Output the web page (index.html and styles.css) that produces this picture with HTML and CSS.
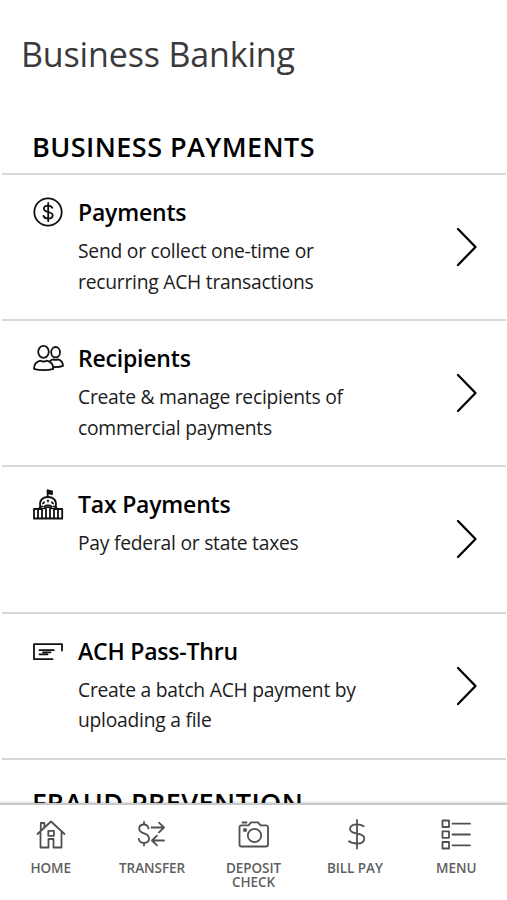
FILE: index.html
```html
<!DOCTYPE html>
<html lang="en">

<head>
    <meta charset="UTF-8">
    <meta name="viewport" content="width=device-width, initial-scale=1.0">
    <title>Business Banking</title>
    <link rel="stylesheet" href="styles.css">
</head>

<body>
    <main class="content">
        <h1 class="page-title">Business Banking</h1>

        <h2 class="section-title">BUSINESS PAYMENTS</h2>
        <ul class="list">
            <li class="item">
                <svg class="item-icon" viewBox="0 0 32 32">
                    <circle cx="16" cy="16" r="13.7" />
                    <path d="M20.3 11.800c-.8-1.500-2.200-2.200-4.200-2.200-2.500 0-4.200 1.200-4.200 3.100 0 4.400 8.800 2.200 8.800 6.600 0 2.100-1.800 3.300-4.500 3.300-2.400 0-4.100-.9-4.700-2.700M16.200 7v18.200" />
                </svg>
                <div class="item-text">
                    <h3>Payments</h3>
                    <p>Send or collect one-time or<br>recurring ACH transactions</p>
                </div>
                <svg class="chevron" viewBox="0 0 24 40"><path d="M3 2l17.500 18L3 38" /></svg>
            </li>
            <li class="item">
                <svg class="item-icon" viewBox="0 0 32 32">
                    <ellipse cx="11.500" cy="9.800" rx="5.300" ry="6" />
                    <path d="M2 26.800c0-4.300 2.600-7.200 6.400-8.100 2 1 4.300 1 6.300 0 3.800.9 6.600 3.800 6.600 8.100-5 1.700-14.300 1.700-19.300 0z" />
                    <ellipse cx="23.600" cy="10.200" rx="4.400" ry="5.200" />
                    <path d="M17.500 19.300c1-.9 2-1.400 3.700-1.900 1.600.7 3.200.7 4.800 0 3 .8 4.900 3 5 6.500-2.600 1.100-6 1.400-9.800 1.100" />
                </svg>
                <div class="item-text">
                    <h3>Recipients</h3>
                    <p>Create &amp; manage recipients of<br>commercial payments</p>
                </div>
                <svg class="chevron" viewBox="0 0 24 40"><path d="M3 2l17.500 18L3 38" /></svg>
            </li>
            <li class="item">
                <svg class="item-icon" viewBox="0 0 32 32">
                    <path d="M15.700 9V2.500" />
                    <path class="solid" d="M15.700 2.500l4.300 1v2.500l-4.300-.8z" />
                    <path d="M8.300 18.500C7 13 10.300 9 16 9s9 4 7.700 9.500M11 15.500l1-1.200M16 12.500v1M20 14.300l1 1.200M7.500 19.300l3-.8M21.500 18.500l3 .8M12.500 18.500c1.200-1.400 5.800-1.400 7 0" />
                    <path d="M2 21h8l6-2 6 2h8.200M2 21v9.700h28.200V21M2 30.500h28.200M6 22v8M10 22v8M14 21v9M18 21v9M22 22v8M26 22v8" />
                </svg>
                <div class="item-text">
                    <h3>Tax Payments</h3>
                    <p>Pay federal or state taxes</p>
                </div>
                <svg class="chevron" viewBox="0 0 24 40"><path d="M3 2l17.500 18L3 38" /></svg>
            </li>
            <li class="item">
                <svg class="item-icon" viewBox="0 0 32 32">
                    <path d="M20.500 24.200H2V9.200h28v6.300M7.500 15.200h14.300M7.500 19.300h8M11 17.300h7.500" />
                </svg>
                <div class="item-text">
                    <h3>ACH Pass-Thru</h3>
                    <p>Create a batch ACH payment by<br>uploading a file</p>
                </div>
                <svg class="chevron" viewBox="0 0 24 40"><path d="M3 2l17.500 18L3 38" /></svg>
            </li>
        </ul>

        <h2 class="section-title">FRAUD PREVENTION</h2>
    </main>

    <nav class="tabbar">
        <a class="tab">
            <svg viewBox="0 0 32 32">
                <path d="M2.500 16L16 3.500 29.500 16M5.800 12.500V5h3.500v4.200M5.500 14.500V29.500h8V21h5v8.500h8V14.500M13.300 12.800h5.600v5h-5.600z" />
            </svg>
            <span>HOME</span>
        </a>
        <a class="tab">
            <svg viewBox="0 0 32 32">
                <path d="M12.500 10.500C12 8 10.200 6.500 8 6.500c-2.800 0-4.800 1.600-4.800 4.200C3.200 16.800 13 13.900 13 20.500c0 2.700-2 4.400-5 4.400-2.800 0-4.800-1.300-5.200-4M8 4V6.500M8 25v2.500M15.500 9.500h12.500M23 4.700l5 4.800-5 4.800M28 22.500H16M21 17.700l-5 4.800 5 4.800" />
            </svg>
            <span>TRANSFER</span>
        </a>
        <a class="tab">
            <svg viewBox="0 0 32 32">
                <path d="M4.500 7.300h7l2.500-3h7l2.500 3h5.500q2 0 2 2v17.200q0 2-2 2h-24.500q-2 0-2-2v-17.200q0-2 2-2zM5.500 4.500h4" />
                <circle cx="17.500" cy="17.500" r="6.700" />
                <circle cx="8" cy="12" r="1.200" />
            </svg>
            <span>DEPOSIT<br>CHECK</span>
        </a>
        <a class="tab">
            <svg viewBox="0 0 32 32">
                <path d="M24.700 8.200C23 7 21 6.300 18 6.300c-4.500 0-7 1.800-7 4.700 0 6.500 14.300 2.900 14.300 9.400 0 3.300-2.700 5.100-7.300 5.100-3.600 0-6-.5-8-2.200M18 2v28.500" />
            </svg>
            <span>BILL PAY</span>
        </a>
        <a class="tab">
            <svg viewBox="0 0 32 32">
                <path d="M2.500 2.500h6.500v6.500H2.500zM2.500 13.300h6.500v6.500H2.500zM2.500 24h6.500v6.500H2.500zM12.500 5.700h17.500M12.500 16.500h17.500M12.500 27.300h17.500" />
            </svg>
            <span>MENU</span>
        </a>
    </nav>
</body>

</html>
```
FILE: styles.css
```css
* {
    box-sizing: border-box;
    margin: 0;
    padding: 0;
}

body {
    font-family: "Open Sans", "Noto Sans", sans-serif;
    background: #fff;
    color: #111;
    height: 900px;
    display: flex;
    flex-direction: column;
    overflow: hidden;
}

.content {
    height: 803px;
    overflow: hidden;
    padding: 0 1px 0 2px;
}

.page-title {
    font-size: 34px;
    font-weight: 400;
    line-height: 46px;
    letter-spacing: -0.15px;
    color: #3a3a3c;
    padding: 31px 0 0 19px;
}

.section-title {
    font-size: 27px;
    font-weight: 600;
    line-height: 36px;
    letter-spacing: 0.45px;
    color: #000;
    padding-left: 30px;
}

.page-title + .section-title {
    margin-top: 52px;
    margin-bottom: 8px;
}

.list {
    list-style: none;
    border-top: 2px solid #d8d8d8;
    margin-bottom: 25px;
}

.item {
    display: flex;
    align-items: flex-start;
    height: 146.2px;
    padding: 20px 27px 0 30px;
    border-bottom: 2px solid #d8d8d8;
}

svg {
    fill: none;
    stroke: #111;
    stroke-width: 1.8;
    stroke-linecap: round;
    stroke-linejoin: round;
    flex: none;
}

.solid {
    fill: #111;
}

.item-icon {
    width: 32px;
    height: 32px;
    margin: 1px 14px 0 0;
}

.item-text {
    flex: 1;
    white-space: nowrap;
}

.item-text h3 {
    font-size: 23px;
    font-weight: 600;
    line-height: 34px;
    letter-spacing: -0.2px;
    color: #000;
}

.item-text p {
    font-size: 19.3px;
    line-height: 30.5px;
    letter-spacing: -0.25px;
    margin-top: 7px;
    color: #1c1c1c;
}

.chevron {
    width: 24px;
    height: 40px;
    margin-top: 32px;
    stroke: #000;
    stroke-width: 2.3;
}

.tabbar {
    flex: 1;
    display: grid;
    grid-template-columns: repeat(5, 1fr);
    background: #fff;
    border-top: 2px solid #c8c8c8;
    box-shadow: 0 -1px 2px rgba(0, 0, 0, 0.15);
}

.tab {
    display: flex;
    flex-direction: column;
    align-items: center;
    padding-top: 13px;
    font-size: 13.5px;
    font-weight: 600;
    line-height: 14px;
    letter-spacing: -0.05px;
    text-align: center;
    color: #606060;
}

.tab svg {
    width: 32px;
    height: 32px;
    margin-bottom: 11px;
    stroke: #505050;
    stroke-width: 1.8;
}
```
